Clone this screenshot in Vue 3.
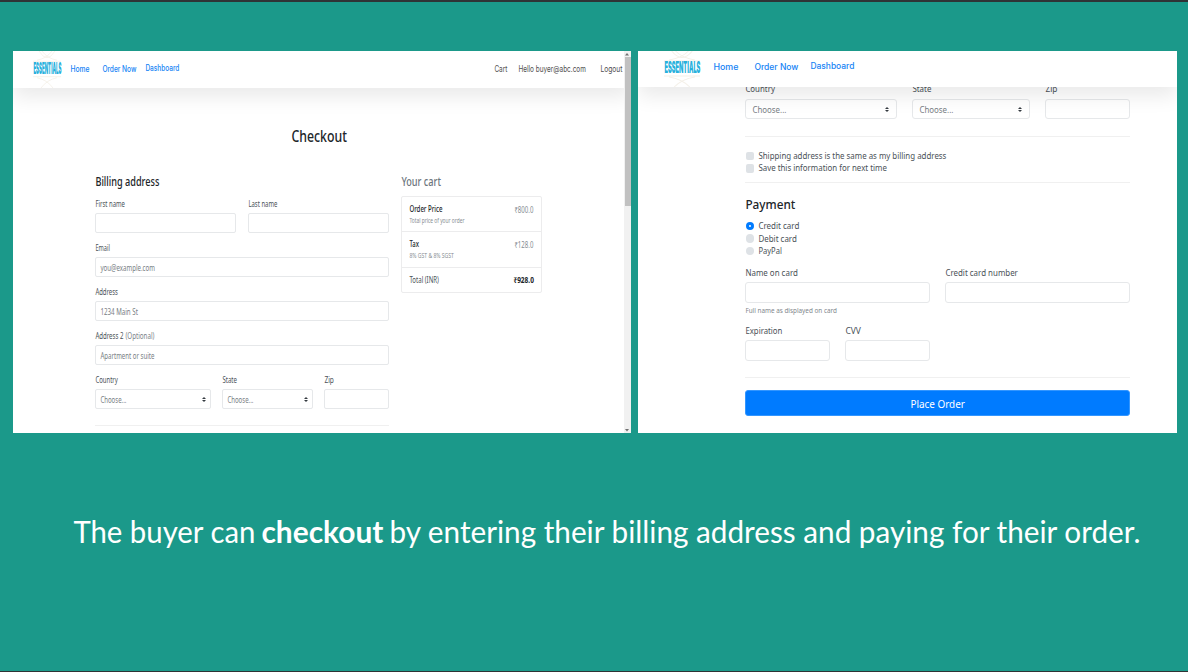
<script setup>
// Squeezes or stretches a label to an exact width while keeping its flow size in step.
const vFit = {
  mounted(el, { value }) {
    const natural = el.getBoundingClientRect().width
    el.style.transform = `translateX(0.4px) scaleX(${value / natural})`
    el.style.marginRight = `${value - natural}px`
  },
}

const billing = [
  { label: 'Email', lw: 14.5, hint: 'you@example.com', hw: 54.5 },
  { label: 'Address', lw: 22.5, hint: '1234 Main St', hw: 37.5 },
  { label: 'Address 2', lw: 28, extra: '(Optional)', ew: 29, hint: 'Apartment or suite', hw: 54 },
]
const checks = [
  { text: 'Shipping address is the same as my billing address', w: 188 },
  { text: 'Save this information for next time', w: 128.5 },
]
const methods = [
  { text: 'Credit card', w: 41, on: true },
  { text: 'Debit card', w: 38.5 },
  { text: 'PayPal', w: 23.5 },
]
</script>

<template>
  <main class="slide">
    <div class="shots">
      <section class="panel left">
        <header class="nav">
          <div class="brand">
            <svg class="deco" viewBox="0 0 28 36" preserveAspectRatio="none">
              <path d="M6 0Q14 13 22 0M4 9Q14 7 19 0M24 9Q14 7 9 0M0 10H28M0 25H28M4 26Q14 28 20 36M24 26Q14 28 8 36" />
            </svg>
            <span v-fit="28" class="t logo">ESSENTIALS</span>
          </div>
          <span v-fit="19" class="t link home">Home</span>
          <span v-fit="34" class="t link order">Order Now</span>
          <span v-fit="34" class="t link dash">Dashboard</span>
          <span class="grow"></span>
          <span v-fit="13" class="t user">Cart</span>
          <span v-fit="67.5" class="t user hello">Hello buyer@abc.com</span>
          <span v-fit="22" class="t user out">Logout</span>
        </header>

        <h1 class="title"><span v-fit="55.5" class="t">Checkout</span></h1>

        <div class="columns">
          <div class="billing">
            <h2 class="heading"><span v-fit="64" class="t">Billing address</span></h2>
            <div class="row names">
              <div class="field">
                <div class="label"><span v-fit="29.5" class="t">First name</span></div>
                <div class="input"></div>
              </div>
              <div class="field">
                <div class="label"><span v-fit="29" class="t">Last name</span></div>
                <div class="input"></div>
              </div>
            </div>
            <div v-for="f in billing" :key="f.label" class="field">
              <div class="label">
                <span v-fit="f.lw" class="t">{{ f.label }}</span>
                <span v-if="f.extra" v-fit="f.ew" class="t muted">{{ f.extra }}</span>
              </div>
              <div class="input"><span v-fit="f.hw" class="t">{{ f.hint }}</span></div>
            </div>
            <div class="row region">
              <div class="field">
                <div class="label"><span v-fit="22.5" class="t">Country</span></div>
                <div class="input">
                  <span v-fit="26" class="t">Choose...</span>
                  <svg class="caret" viewBox="0 0 4 5"><path d="M2 0L0 2H4ZM2 5L0 3H4Z" /></svg>
                </div>
              </div>
              <div class="field">
                <div class="label"><span v-fit="14.5" class="t">State</span></div>
                <div class="input">
                  <span v-fit="26" class="t">Choose...</span>
                  <svg class="caret" viewBox="0 0 4 5"><path d="M2 0L0 2H4ZM2 5L0 3H4Z" /></svg>
                </div>
              </div>
              <div class="field">
                <div class="label"><span v-fit="9.5" class="t">Zip</span></div>
                <div class="input"></div>
              </div>
            </div>
            <div class="rule"></div>
          </div>

          <aside class="cart">
            <h2 class="heading grey"><span v-fit="39.5" class="t">Your cart</span></h2>
            <div class="items">
              <div class="item">
                <div>
                  <div class="name"><span v-fit="33" class="t">Order Price</span></div>
                  <div class="note"><span v-fit="55" class="t">Total price of your order</span></div>
                </div>
                <div class="price"><span v-fit="19" class="t">₹800.0</span></div>
              </div>
              <div class="item tax">
                <div>
                  <div class="name"><span v-fit="9.5" class="t">Tax</span></div>
                  <div class="note"><span v-fit="44.5" class="t">8% GST &amp; 8% SGST</span></div>
                </div>
                <div class="price"><span v-fit="19" class="t">₹128.0</span></div>
              </div>
              <div class="item total">
                <span v-fit="29.5" class="t">Total (INR)</span>
                <b v-fit="20.5" class="t">₹928.0</b>
              </div>
            </div>
          </aside>
        </div>

        <div class="scrollbar">
          <svg viewBox="0 0 6 6"><path d="M3 2L1 4.5H5Z" /></svg>
          <div class="thumb"></div>
          <svg viewBox="0 0 6 6"><path d="M3 4.5L1 2H5Z" /></svg>
        </div>
      </section>

      <section class="panel right">
        <header class="nav">
          <div class="brand">
            <svg class="deco" viewBox="0 0 28 36" preserveAspectRatio="none">
              <path d="M6 0Q14 13 22 0M4 9Q14 7 19 0M24 9Q14 7 9 0M0 10H28M0 25H28M4 26Q14 28 20 36M24 26Q14 28 8 36" />
            </svg>
            <span v-fit="36" class="t logo">ESSENTIALS</span>
          </div>
          <span v-fit="25" class="t link home">Home</span>
          <span v-fit="44" class="t link order">Order Now</span>
          <span v-fit="44" class="t link dash">Dashboard</span>
        </header>

        <div class="pay">
          <div class="row region">
            <div class="field">
              <div class="label"><span v-fit="29.5" class="t">Country</span></div>
              <div class="input">
                <span v-fit="34" class="t">Choose...</span>
                <svg class="caret" viewBox="0 0 4 5"><path d="M2 0L0 2H4ZM2 5L0 3H4Z" /></svg>
              </div>
            </div>
            <div class="field">
              <div class="label"><span v-fit="19" class="t">State</span></div>
              <div class="input">
                <span v-fit="34" class="t">Choose...</span>
                <svg class="caret" viewBox="0 0 4 5"><path d="M2 0L0 2H4ZM2 5L0 3H4Z" /></svg>
              </div>
            </div>
            <div class="field">
              <div class="label"><span v-fit="12" class="t">Zip</span></div>
              <div class="input"></div>
            </div>
          </div>
          <div class="rule"></div>
          <div class="options">
            <div v-for="c in checks" :key="c.text" class="option">
              <i class="box"></i><span v-fit="c.w" class="t">{{ c.text }}</span>
            </div>
          </div>
          <div class="rule"></div>
          <h2 class="payment"><span v-fit="50" class="t">Payment</span></h2>
          <div class="methods">
            <div v-for="m in methods" :key="m.text" class="option">
              <i class="dot" :class="{ on: m.on }"></i><span v-fit="m.w" class="t">{{ m.text }}</span>
            </div>
          </div>
          <div class="row card">
            <div class="field">
              <div class="label"><span v-fit="52.5" class="t">Name on card</span></div>
              <div class="input"></div>
              <div class="help"><span v-fit="91.5" class="t">Full name as displayed on card</span></div>
            </div>
            <div class="field">
              <div class="label"><span v-fit="72.5" class="t">Credit card number</span></div>
              <div class="input"></div>
            </div>
          </div>
          <div class="row expiry">
            <div class="field">
              <div class="label"><span v-fit="37" class="t">Expiration</span></div>
              <div class="input"></div>
            </div>
            <div class="field">
              <div class="label"><span v-fit="15.5" class="t">CVV</span></div>
              <div class="input"></div>
            </div>
          </div>
          <div class="rule"></div>
          <div class="submit"><span v-fit="54.5" class="t">Place Order</span></div>
        </div>
      </section>
    </div>

    <p class="caption">
      <span v-fit="182" class="t">The buyer can</span>
      <b v-fit="122" class="t">checkout</b>
      <span v-fit="751" class="t">by entering their billing address and paying for their order.</span>
    </p>
  </main>
</template>

<style>
body {
  margin: 0;
}
</style>

<style scoped>
* {
  box-sizing: border-box;
}
.slide {
  width: 1188px;
  height: 672px;
  overflow: hidden;
  background: #1b998a;
  border-top: 2px solid #2f3335;
  border-bottom: 1px solid #2f3335;
  font-family: "Noto Sans", "Open Sans", sans-serif;
  color: #4a5157;
}
.t {
  display: inline-block;
  flex: none;
  white-space: nowrap;
  transform-origin: 0 50%;
}
h1,
h2,
p {
  margin: 0;
}
.shots {
  display: flex;
  gap: 7px;
  padding: 49px 0 0 13px;
}
.panel {
  position: relative;
  height: 382px;
  background: #fff;
  overflow: hidden;
}
.left {
  width: 618px;
}
.right {
  width: 539px;
}

/* Navigation */
.nav {
  position: relative;
  z-index: 1;
  display: flex;
  align-items: center;
  height: 37px;
  background: #fff;
  box-shadow: 0 9px 20px rgba(0, 0, 0, 0.085);
}
.left .nav {
  padding: 0 9px 0 20px;
}
.right .nav {
  height: 36px;
  padding-left: 26px;
}
.brand {
  position: relative;
  display: flex;
  align-items: center;
  height: 100%;
}
.deco {
  position: absolute;
  left: 0;
  top: 0;
  width: 100%;
  height: 100%;
  fill: none;
  stroke: #f4f0e8;
  stroke-width: 0.8;
}
.logo {
  position: relative;
  font: 900 15.5px/20px Inter, sans-serif;
  color: #27b0dc;
}
.right .logo {
  top: -1.5px;
}
.left .logo {
  top: -0.5px;
}
.link {
  font-family: Inter, sans-serif;
  font-size: 8.4px;
  font-weight: 500;
  line-height: 12px;
  color: #1583f5;
}
.left .link {
  position: relative;
  top: -0.5px;
}
.left .home {
  margin-left: 9px;
}
.left .order {
  margin-left: 13px;
}
.left .dash {
  margin-left: 9px;
  top: -1.5px;
}
.right .link {
  position: relative;
  top: -2px;
}
.right .home {
  margin-left: 12.5px;
}
.right .order {
  margin-left: 16.5px;
}
.right .dash {
  margin-left: 12px;
  top: -3px;
}
.grow {
  flex: 1;
}
.user {
  position: relative;
  top: -0.5px;
  font: 400 8.6px/12px Inter, sans-serif;
  color: #4f4f4f;
}
.hello {
  margin-left: 11px;
}
.out {
  margin-left: 15px;
}

/* Shared form parts */
.row {
  display: grid;
}
.label {
  display: flex;
  align-items: center;
}
.input {
  display: flex;
  align-items: center;
  height: 20px;
  border: 1px solid #e6e8ea;
  border-radius: 2px;
  background: #fff;
  color: #787e84;
}
.caret {
  margin-left: auto;
  width: 4px;
  height: 5px;
  fill: #343a40;
}
.rule {
  height: 1px;
  background: #f0f0f0;
}

/* Checkout panel */
.title {
  display: flex;
  justify-content: center;
  margin-top: 36px;
  padding-right: 7px;
  font-size: 16.5px;
  font-weight: 500;
  line-height: 24px;
  color: #212529;
}
.columns {
  display: flex;
  gap: 12px;
  margin: 26px 0 0 82px;
}
.billing {
  width: 294px;
}
.heading {
  display: flex;
  font-size: 12.3px;
  font-weight: 500;
  line-height: 16px;
  color: #212529;
}
.grey {
  color: #6c757d;
}
.billing .heading {
  margin-bottom: 6px;
}
.left .field {
  height: 44px;
  font-size: 8.2px;
  line-height: 12px;
}
.left .label {
  height: 14px;
  gap: 2px;
  margin-bottom: 3px;
  padding-top: 1px;
}
.muted {
  color: #7b8288;
}
.left .input {
  padding: 1px 4px 0;
}
.names {
  grid-template-columns: 1fr 1fr;
  gap: 12px;
}
.left .region {
  grid-template-columns: 116px 91px 65px;
  gap: 11px;
}
.left .rule {
  margin-top: 9px;
}
.cart {
  width: 141px;
}
.items {
  margin-top: 6px;
  border: 1px solid #ececed;
  border-radius: 2px;
}
.item {
  display: flex;
  justify-content: space-between;
  height: 35px;
  padding: 6px 8px 0 7px;
  border-bottom: 1px solid #ececed;
  font-size: 8.4px;
  line-height: 12px;
}
.item.tax {
  height: 36px;
}
.item.total {
  height: 24px;
  padding-top: 6px;
  border: 0;
}
.name {
  display: flex;
  font-weight: 500;
  color: #212529;
}
.note {
  display: flex;
  font-size: 6.4px;
  line-height: 11px;
  color: #868c92;
}
.price {
  display: flex;
  padding-top: 1px;
  color: #868c92;
}
.total b {
  color: #212529;
}
.scrollbar {
  position: absolute;
  z-index: 2;
  right: 0;
  top: 0;
  display: flex;
  flex-direction: column;
  width: 7px;
  height: 100%;
  background: #f1f1f1;
}
.scrollbar svg {
  width: 6px;
  height: 6px;
  fill: #707070;
}
.thumb {
  height: 149px;
  margin: 0 0.5px 221px 1px;
  background: #c1c1c1;
}

/* Payment panel */
.pay {
  width: 385px;
  margin: -5px 0 0 107px;
  font-size: 8.3px;
  line-height: 12px;
}
.right .label {
  height: 14px;
  margin-bottom: 3px;
}
.right .card .label,
.right .expiry .label {
  padding-top: 1px;
}
.right .input {
  height: 21px;
  padding: 1px 7px 0 6px;
  border-radius: 3px;
}
.right .region {
  grid-template-columns: 152px 118px 85px;
  gap: 15px;
}
.right .region .input {
  height: 20px;
}
.right .region + .rule {
  margin-top: 17px;
}
.options {
  padding: 12.5px 0 7.5px;
}
.option {
  display: flex;
  align-items: center;
  height: 12.6px;
}
.box,
.dot {
  width: 8.5px;
  height: 8.5px;
  margin: 0 4px 0 0.5px;
  border-radius: 2px;
  background: #dee2e6;
}
.dot {
  border-radius: 50%;
}
.dot.on {
  border: 3px solid #007bff;
  background: #fff;
}
.payment {
  display: flex;
  margin-top: 14px;
  font-size: 12.4px;
  font-weight: 500;
  line-height: 16px;
  color: #212529;
}
.methods {
  margin-top: 6.5px;
}
.card {
  grid-template-columns: 185px 185px;
  gap: 15px;
  height: 58px;
  margin-top: 7.7px;
}
.help {
  display: flex;
  height: 15px;
  align-items: center;
  padding-top: 1px;
  font-size: 6.7px;
  color: #80868c;
}
.expiry {
  grid-template-columns: 85px 85px;
  gap: 15px;
}
.expiry + .rule {
  margin-top: 16px;
}
.submit {
  display: flex;
  justify-content: center;
  align-items: center;
  height: 26px;
  margin-top: 12px;
  padding-top: 1px;
  border: 1px solid #3396ff;
  border-radius: 3px;
  background: #007bff;
  font-size: 10.6px;
  color: #fff;
}

/* Slide caption */
.caption {
  display: flex;
  gap: 6px;
  margin: 76px 0 0 73px;
  font: 400 30px/44px Lato, sans-serif;
  color: #fff;
}
</style>
